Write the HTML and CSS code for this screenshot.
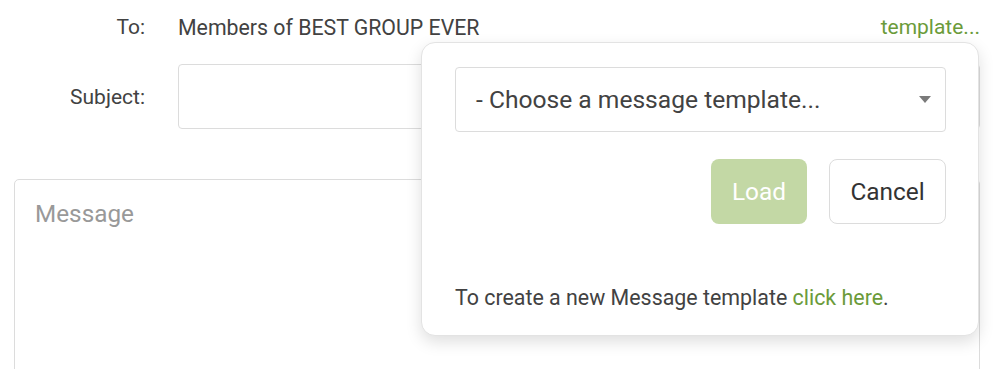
FILE: index.html
```html
<!DOCTYPE html>
<html>
<head>
<meta charset="utf-8">
<link rel="stylesheet" href="styles.css">
</head>
<body>
<div class="page">
  <div class="row row-to">
    <div class="label">To:</div>
    <div class="value">Members of BEST GROUP EVER</div>
    <a class="link tpl-link">template...</a>
  </div>
  <div class="row row-subject">
    <div class="label">Subject:</div>
    <div class="input"></div>
  </div>
  <div class="message"><span class="placeholder">Message</span></div>

  <div class="popover">
    <div class="select">
      <span class="select-text">- Choose a message template...</span>
      <svg class="caret" width="12" height="7" viewBox="0 0 12 7"><path d="M0 0 L12 0 L6 7 Z" fill="#7a7a7a"/></svg>
    </div>
    <div class="buttons">
      <div class="btn btn-load">Load</div>
      <div class="btn btn-cancel">Cancel</div>
    </div>
    <p class="note">To create a new Message template <a class="link">click here</a>.</p>
  </div>
</div>
</body>
</html>
```
FILE: styles.css
```css
html, body {
  margin: 0;
  padding: 0;
  background: #fff;
}
body {
  font-family: Roboto, "Liberation Sans", Arial, sans-serif;
  color: #424242;
  font-size: 21px;
}
.page {
  position: relative;
  padding: 8px 19px 0 14px;
  height: 361px;
  overflow: hidden;
}
.row {
  display: grid;
  grid-template-columns: 131px 1fr auto;
  column-gap: 33px;
  align-items: center;
}
.row-to {
  height: 38px;
}
.value {
  font-size: 21.3px;
}
.label {
  text-align: right;
}
.link {
  color: #6b9b3a;
  text-decoration: none;
}
.row-subject {
  margin-top: 18px;
  grid-template-columns: 131px 1fr;
}
.input {
  height: 63px;
  border: 1px solid #dcdcdc;
  border-radius: 4px;
}
.message {
  margin-top: 50px;
  height: 260px;
  border: 1px solid #dcdcdc;
  border-radius: 5px;
  padding: 17px 20px;
  font-size: 24.3px;
  line-height: 34px;
}
.placeholder {
  color: #999;
}
.popover {
  position: absolute;
  left: 421px;
  top: 42px;
  width: 491px;
  padding: 24px 32px 22px 33px;
  background: #fff;
  border: 1px solid #e3e3e3;
  border-radius: 14px;
  box-shadow: 0 6px 16px rgba(0, 0, 0, 0.13);
}
.select {
  height: 63px;
  border: 1px solid #dcdcdc;
  border-radius: 4px;
  display: flex;
  align-items: center;
  justify-content: space-between;
  padding: 0 14px 0 20px;
  font-size: 24.6px;
  color: #424242;
}
.caret {
  display: block;
}
.buttons {
  margin-top: 27px;
  display: flex;
  justify-content: flex-end;
  gap: 22px;
}
.btn {
  height: 65px;
  box-sizing: border-box;
  display: flex;
  align-items: center;
  justify-content: center;
  font-size: 24.4px;
  border-radius: 8px;
}
.btn-load {
  width: 96px;
  background: #c3d8a5;
  color: #fff;
}
.btn-cancel {
  width: 117px;
  border: 1px solid #dcdcdc;
  color: #333;
  background: #fff;
}
.note {
  margin: 59px 0 0 0;
  line-height: 30px;
  font-size: 21.4px;
  color: #424242;
}
```
